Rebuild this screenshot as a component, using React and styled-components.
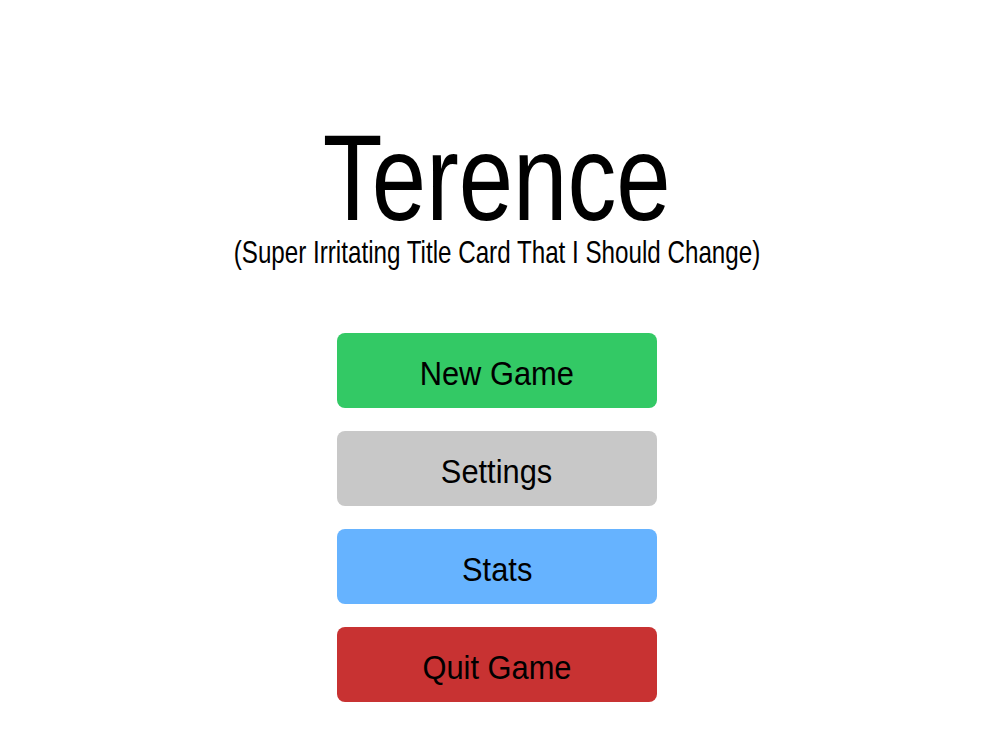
import styled, { createGlobalStyle } from 'styled-components'

const GlobalStyle = createGlobalStyle`
    html, body {
        margin: 0;
        padding: 0;
        background: #ffffff;
    }
    body {
        font-family: "Liberation Sans", Arial, sans-serif;
        color: #000000;
    }
`

const Screen = styled.main`
    width: 992px;
    height: 742px;
    display: flex;
    flex-direction: column;
    align-items: center;
    padding: 118px 0 0 2px;
    box-sizing: border-box;
`

// the reference uses a condensed face, so squeeze Arial-width text sideways
const Squeezed = styled.span`
    display: inline-block;
    white-space: nowrap;
    transform: scaleX(${props => props.squeeze});
`

const Title = styled.h1`
    margin: 0;
    font-size: 123px;
    font-weight: normal;
    line-height: 120px;
`

const Subtitle = styled.div`
    font-size: 30.5px;
    line-height: 30px;
    margin-top: -1px;
`

const Menu = styled.nav`
    display: flex;
    flex-direction: column;
    gap: 23px;
    margin-top: 66px;
`

const MenuButton = styled.button`
    width: 320px;
    height: 75px;
    padding: 7px 0 0 0;
    border: none;
    border-radius: 8px;
    background-color: ${props => props.colour};
    font-family: inherit;
    font-size: 33.5px;
    line-height: 36px;
    color: #000000;
    cursor: pointer;
`

const buttons = [
    { label: 'New Game', colour: '#33c965' },
    { label: 'Settings', colour: '#c8c8c8' },
    { label: 'Stats', colour: '#66b3ff' },
    { label: 'Quit Game', colour: '#c83232' },
]

function App() {
    return (
        <>
            <GlobalStyle />
            <Screen>
                <Title><Squeezed squeeze={0.795}>Terence</Squeezed></Title>
                <Subtitle>
                    <Squeezed squeeze={0.793}>(Super Irritating Title Card That I Should Change)</Squeezed>
                </Subtitle>
                <Menu>
                    {buttons.map(b => (
                        <MenuButton key={b.label} colour={b.colour}>
                            <Squeezed squeeze={0.92}>{b.label}</Squeezed>
                        </MenuButton>
                    ))}
                </Menu>
            </Screen>
        </>
    )
}

export default App
